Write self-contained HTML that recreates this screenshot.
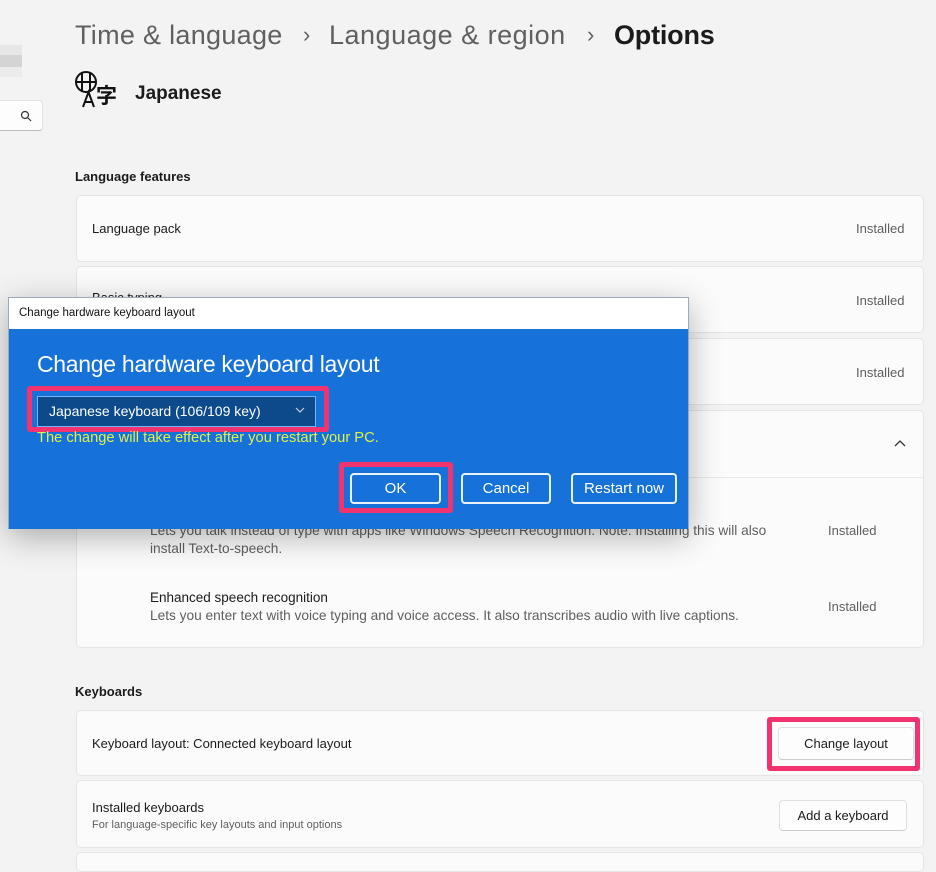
<!DOCTYPE html>
<html><head><meta charset="utf-8"><style>
*{box-sizing:border-box;margin:0;padding:0}
body{width:936px;height:856px;overflow:hidden;background:#f3f3f3;font-family:"Liberation Sans",sans-serif;color:#1b1b1b;position:relative}
.a{position:absolute;white-space:nowrap}
.card{position:absolute;left:76px;width:848px;background:#fbfbfb;border:1px solid #e5e5e5;border-radius:5px}
.t{font-size:13px;color:#1b1b1b}
.g{font-size:13px;color:#5f5f5f}
.btn{position:absolute;background:#fdfdfd;border:1px solid #e0e0e0;border-bottom-color:#ccc;border-radius:4px;font-size:13px;text-align:center;color:#1b1b1b}
.pink{position:absolute;border:5px solid #f2336f;border-radius:3px}
.dbtn{position:absolute;top:473px;height:31px;border:2px solid #e8f2ff;border-radius:4px;color:#fff;font-size:15px;text-align:center;line-height:27px}
</style></head><body>
<div class="a" style="left:0;top:45px;width:22px;height:10px;background:#e6e6e6"></div>
<div class="a" style="left:0;top:55px;width:22px;height:12px;background:#d4d4d4"></div>
<div class="a" style="left:0;top:67px;width:22px;height:10px;background:#ebebeb"></div>
<div class="a" style="left:-5px;top:100px;width:48px;height:31px;background:#fdfdfd;border:1px solid #e3e3e3;border-bottom-color:#bbb;border-radius:4px"></div>
<svg class="a" style="left:20px;top:110px" width="12" height="12" viewBox="0 0 12 12"><circle cx="5" cy="5" r="3.5" fill="none" stroke="#333" stroke-width="1.2"/><path d="M7.5 7.5L11 11" stroke="#333" stroke-width="1.2"/></svg>

<div class="a" style="left:75px;top:20px;font-size:27px;color:#606060;letter-spacing:0.3px">Time &amp; language</div>
<div class="a" style="left:303px;top:22px;font-size:22px;color:#606060">›</div>
<div class="a" style="left:329px;top:20px;font-size:27px;color:#606060;letter-spacing:0.5px">Language &amp; region</div>
<div class="a" style="left:587px;top:22px;font-size:22px;color:#606060">›</div>
<div class="a" style="left:614px;top:20px;font-size:27px;font-weight:bold;color:#1b1b1b;letter-spacing:-0.2px">Options</div>

<svg class="a" style="left:74px;top:70px" width="30" height="40" viewBox="0 0 30 40"><circle cx="12" cy="12" r="10" fill="none" stroke="#111" stroke-width="2"/><path d="M8 2.5V21.5M16 2.5V21.5M2 12H22" stroke="#111" stroke-width="2"/><path d="M9 37L14.5 22L20 37M11 32H18" stroke="#111" stroke-width="2" fill="none"/></svg>
<div class="a" style="left:96px;top:80px;font-size:21px;font-weight:bold;font-family:'Noto Sans CJK JP',sans-serif;color:#111">字</div>
<div class="a" style="left:135px;top:83px;font-size:19px;font-weight:bold">Japanese</div>

<div class="a" style="left:75px;top:169px;font-size:13px;font-weight:bold">Language features</div>
<div class="card" style="top:195px;height:67px"></div>
<div class="a t" style="left:92px;top:221px">Language pack</div><div class="a g" style="left:856px;top:221px">Installed</div>
<div class="card" style="top:266px;height:67px"></div>
<div class="a t" style="left:92px;top:290px">Basic typing</div><div class="a g" style="left:856px;top:293px">Installed</div>
<div class="card" style="top:338px;height:67px"></div>
<div class="a g" style="left:856px;top:365px">Installed</div>
<div class="card" style="top:410px;height:238px"></div>
<div class="a" style="left:77px;top:477px;width:846px;height:1px;background:#e8e8e8"></div>
<svg class="a" style="left:893px;top:438px" width="14" height="10" viewBox="0 0 14 10"><path d="M2 8L7 3L12 8" fill="none" stroke="#333" stroke-width="1.3"/></svg>
<div class="a g" style="left:150px;top:523px;font-size:13.7px">Lets you talk instead of type with apps like Windows Speech Recognition. Note: Installing this will also</div>
<div class="a g" style="left:150px;top:541px;font-size:13.7px">install Text-to-speech.</div>
<div class="a g" style="left:828px;top:523px">Installed</div>
<div class="a t" style="left:150px;top:590px;font-size:13.5px">Enhanced speech recognition</div>
<div class="a g" style="left:150px;top:608px;font-size:13.7px">Lets you enter text with voice typing and voice access. It also transcribes audio with live captions.</div>
<div class="a g" style="left:828px;top:599px">Installed</div>

<div class="a" style="left:75px;top:684px;font-size:13px;font-weight:bold">Keyboards</div>
<div class="card" style="top:710px;height:66px"></div>
<div class="a t" style="left:92px;top:736px">Keyboard layout: Connected keyboard layout</div>
<div class="pink" style="left:767px;top:717px;width:153px;height:54px"></div>
<div class="btn" style="left:778px;top:727px;width:136px;height:33px;line-height:31px">Change layout</div>
<div class="card" style="top:780px;height:68px"></div>
<div class="a t" style="left:92px;top:800px">Installed keyboards</div>
<div class="a" style="left:92px;top:819px;font-size:11px;color:#5f5f5f">For language-specific key layouts and input options</div>
<div class="btn" style="left:779px;top:800px;width:128px;height:31px;line-height:29px">Add a keyboard</div>
<div class="card" style="top:852px;height:20px"></div>

<div class="a" style="left:8px;top:297px;width:681px;height:232px;box-shadow:0 8px 30px rgba(0,0,0,.3);border:1px solid #9ab">
<div style="height:31px;background:#fff;font-size:11.5px;padding:9px 10px;color:#111">Change hardware keyboard layout</div>
<div style="height:200px;background:#1672d8"></div>
</div>
<div class="a" style="left:37px;top:351px;font-size:23px;color:#fff;letter-spacing:-0.3px">Change hardware keyboard layout</div>
<div class="pink" style="left:27px;top:386px;width:302px;height:46px"></div>
<div class="a" style="left:37px;top:396px;width:279px;height:31px;background:#0c4a8c;border:1px solid #7ab4f0"></div>
<div class="a" style="left:49px;top:403px;font-size:14px;color:#fff">Japanese keyboard (106/109 key)</div>
<svg class="a" style="left:294px;top:406px" width="12" height="8" viewBox="0 0 12 8"><path d="M2 2L6 6L10 2" fill="none" stroke="#ccd" stroke-width="1.2"/></svg>
<div class="a" style="left:37px;top:430px;font-size:14.7px;color:#dff04a">The change will take effect after you restart your PC.</div>
<div class="pink" style="left:339px;top:462px;width:114px;height:51px"></div>
<div class="dbtn" style="left:350px;width:91px">OK</div>
<div class="dbtn" style="left:461px;width:90px">Cancel</div>
<div class="dbtn" style="left:571px;width:106px">Restart now</div>
</body></html>
